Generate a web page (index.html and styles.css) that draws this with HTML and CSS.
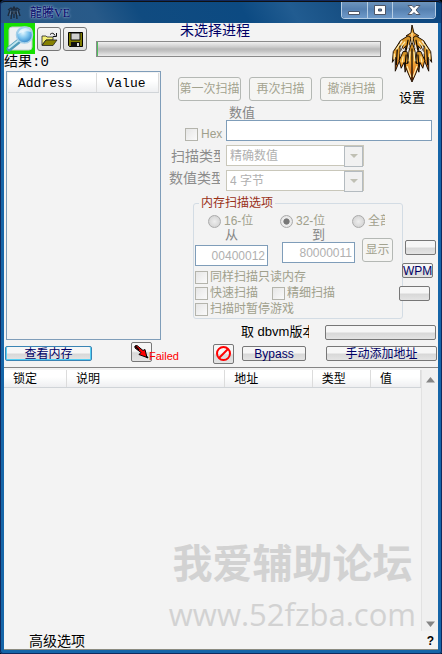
FILE: index.html
```html
<!DOCTYPE html>
<html lang="zh-CN">
<head>
    <meta charset="UTF-8">
    <meta name="viewport" content="width=device-width, initial-scale=1.0">
    <title>龍騰VE</title>
    <link rel="stylesheet" href="styles.css">
</head>
<body>
    <div class="window">
        <header class="titlebar">
            <svg class="app-icon" viewBox="0 0 14 14" width="14" height="14">
                <path d="M1 4l3-2 1 2 2-3 2 3 1-2 3 2M3 4l-2 6M5 4L4 13M7 2v10M9 4l1 9M11 4l2 6M4 7h6" fill="none" stroke="#1d2b3d" stroke-width="1.4"/>
                <path d="M4 5l-1 4M10 5l1 4M7 5v3" stroke="#7e8f9f" stroke-width=".6"/>
            </svg>
            <h1>龍騰VE</h1>
            <div class="window-buttons">
                <button type="button" aria-label="最小化"><svg width="14" height="12" viewBox="0 0 14 12"><path d="M1.500 7.500h11v3h-11z" fill="#fff" stroke="#4d5668"/></svg></button>
                <button type="button" aria-label="最大化"><svg width="14" height="12" viewBox="0 0 14 12"><path d="M1.500 1.500h11v9h-11zM5.500 5h3v2h-3z" fill="#fff" fill-rule="evenodd" stroke="#4d5668"/></svg></button>
                <button type="button" class="close" aria-label="关闭"><svg width="14" height="12" viewBox="0 0 14 12"><path d="M1 1.500h4l2 2 2-2h4L9 6l4 4.500H9l-2-2-2 2H1L5 6z" fill="#fff" stroke="#4d5668"/></svg></button>
            </div>
        </header>

        <main class="panel">
            <div class="tools">
                <div class="tool-row">
                    <button type="button" class="tool tool-process" aria-label="选择进程">
                        <svg width="31" height="31" viewBox="0 0 31 31">
                            <defs>
                                <radialGradient id="lens" cx=".4" cy=".35" r=".7">
                                    <stop offset="0" stop-color="#e4f8ff"/>
                                    <stop offset=".5" stop-color="#7cc4ee"/>
                                    <stop offset="1" stop-color="#2c80c4"/>
                                </radialGradient>
                            </defs>
                            <path d="M5 7q0-3 3-3h15q4 0 5 3v17q0 3-3 3H8q-3 0-3-3z" fill="#edf0f2" stroke="#c3cbd0"/>
                            <path d="M5 26l10-8" stroke="#4f9ab8" stroke-width="5" stroke-linecap="round"/>
                            <path d="M5 25l10-8" stroke="#c0e6ee" stroke-width="2" stroke-linecap="round"/>
                            <circle cx="20.500" cy="12" r="8" fill="url(#lens)" stroke="#a4cfe8" stroke-width="1.500"/>
                            <path d="M14 11q1-5 7-6 5 0 6 4-6-2-13 2z" fill="#fff" opacity=".6"/>
                        </svg>
                    </button>
                    <button type="button" class="tool" aria-label="打开">
                        <svg width="17" height="15" viewBox="0 0 17 15">
                            <path d="M1 13V4h4l1 1h6v3H5z" fill="#f5f076" stroke="#222" stroke-width=".8"/>
                            <path d="M1 13.500L5 8h11l-4 5.500z" fill="#858000" stroke="#222" stroke-width=".8"/>
                            <path d="M9 2.500q3-3 5 1M15.500 1v3.500H12" fill="none" stroke="#111"/>
                        </svg>
                    </button>
                    <button type="button" class="tool" aria-label="保存">
                        <svg width="15" height="15" viewBox="0 0 15 15">
                            <path d="M.5.500h14v14h-13l-1-1z" fill="#807d00" stroke="#000"/>
                            <path d="M3 1h9v7H3z" fill="#d0d0d0" stroke="#111"/>
                            <path d="M3 10h9v5H3z" fill="#111"/>
                            <path d="M9 11h2v3H9z" fill="#ddd"/>
                        </svg>
                    </button>
                </div>
                <p class="result">结果:0</p>
            </div>

            <div class="process">
                <h2 id="process-name">未选择进程</h2>
                <progress value="1" max="200" aria-labelledby="process-name"></progress>
            </div>

            <a class="settings" href="#">
                <svg width="42" height="58" viewBox="0 0 42 58">
                    <defs>
                        <linearGradient id="gold" x2="0" y2="1">
                            <stop offset="0" stop-color="#c98a20"/>
                            <stop offset=".5" stop-color="#f2aa3a"/>
                            <stop offset="1" stop-color="#c04c0c"/>
                        </linearGradient>
                    </defs>
                    <g fill="url(#gold)" stroke="#1c0e02" stroke-width="1">
                        <path d="M21 0l2 8 5 3-4 1-3 6-3-6-3-1 5-3z"/>
                        <path d="M17 11l-8 5-4 8 7-4-2 7 5-6-2 10 5-9 2-9zM25 11l8 5 4 8-7-4 2 7-5-6 2 10-5-9-2-9z"/>
                        <path d="M8 18l-6 9-1 11 3-5 0 14 4-10 1-12zM34 18l6 9 1 11-3-5 0 14-4-10-1-12z"/>
                        <path d="M12 27l-4 9 2 8 3-6 1 10 3-12-1-9zM30 27l4 9-2 8-3-6-1 10-3-12 1-9z"/>
                        <path d="M21 17l-3 9-1 13-4 0 4 10 4 9 4-9 4-10-4 0-1-13z"/>
                    </g>
                    <path d="M21 8v10M19 27l-1 10M23 27l1 10M16 42l4 11M26 42l-4 11M9 19l-4 6M33 19l4 6M14 17l-4 5M28 17l4 5M3 29l0 6M39 29l0 6M12 32l-1 6M30 32l1 6" stroke="#fff0b4" stroke-width="1.200"/>
                    <path d="M21 24v32M17 15l-2 11M25 15l2 11M6 25l-1 16M36 25l1 16M15 30l-1 12M27 30l1 12" stroke="#150b02" stroke-width="1.300"/>
                    <path d="M11 16l-2 3M31 16l2 3M12 24l-3 5M30 24l3 5M18 20l-2 7M24 20l2 7" stroke="#f3f3f3" stroke-width="1.200"/>
                </svg>
                <span>设置</span>
            </a>

            <div class="found-list">
                <table>
                    <thead>
                        <tr><th>Address</th><th>Value</th></tr>
                    </thead>
                </table>
            </div>

            <div class="scan-buttons">
                <button type="button" class="flat" disabled>第一次扫描</button>
                <button type="button" class="flat" disabled>再次扫描</button>
                <button type="button" class="flat" disabled>撤消扫描</button>
            </div>

            <form class="scan-form">
                <label class="value-label" for="value">数值</label>
                <div class="fields">
                    <label class="check hex"><input type="checkbox" disabled>Hex</label>
                    <input type="text" id="value" class="value-input">
                    <label class="field-label" for="scan-type">扫描类型</label>
                    <span class="combo"><select id="scan-type" disabled><option>精确数值</option></select></span>
                    <label class="field-label wide" for="value-type">数值类型</label>
                    <span class="combo"><select id="value-type" disabled><option>4 字节</option></select></span>
                </div>

                <div class="options-row">
                    <fieldset>
                        <legend>内存扫描选项</legend>
                        <div class="bits">
                            <label class="check"><input type="radio" name="bits" disabled>16-位</label>
                            <label class="check"><input type="radio" name="bits" checked disabled>32-位</label>
                            <label class="check all"><input type="radio" name="bits" disabled>全部</label>
                        </div>
                        <div class="range">
                            <label class="from">从<input type="text" value="00400012" disabled></label>
                            <label class="to">到<input type="text" value="80000011" disabled></label>
                            <button type="button" class="flat" disabled>显示</button>
                        </div>
                        <div class="checks">
                            <label class="check full"><input type="checkbox" disabled>同样扫描只读内存</label>
                            <label class="check"><input type="checkbox" disabled>快速扫描</label>
                            <label class="check"><input type="checkbox" disabled>精细扫描</label>
                            <label class="check full"><input type="checkbox" disabled>扫描时暂停游戏</label>
                        </div>
                    </fieldset>
                    <div class="side-buttons">
                        <button type="button" class="btn" aria-label="选项一"></button>
                        <button type="button" class="btn">WPM</button>
                        <button type="button" class="btn" aria-label="选项二"></button>
                    </div>
                </div>

                <div class="dbvm">
                    <span>取 dbvm版本</span>
                    <button type="button" class="btn" aria-label="取 dbvm版本"></button>
                </div>
            </form>
        </main>

        <div class="actions">
            <button type="button" class="btn view-memory">查看内存</button>
            <button type="button" class="btn square" aria-label="添加选中地址">
                <svg width="15" height="14" viewBox="0 0 15 14"><path d="M1 1l2-.5 6 5 2-1 2 8-8-3 2-2L1 3z" fill="#f00" stroke="#000"/><path d="M1 1l4 4M12 11l2 2" stroke="#000" stroke-width="1.500"/></svg>
            </button>
            <span class="failed">Failed</span>
            <button type="button" class="btn square stop" aria-label="清除列表">
                <svg width="17" height="17" viewBox="0 0 17 17"><circle cx="8.500" cy="8.500" r="6.500" fill="none" stroke="#f00" stroke-width="2"/><path d="M4 13l9-9" stroke="#f00" stroke-width="2"/></svg>
            </button>
            <button type="button" class="btn bypass">Bypass</button>
            <button type="button" class="btn add-address">手动添加地址</button>
        </div>

        <section class="address-list">
            <div class="address-table">
                <table>
                    <thead>
                        <tr><th>锁定</th><th>说明</th><th>地址</th><th>类型</th><th>值</th></tr>
                    </thead>
                </table>
            </div>
            <div class="scrollbar">
                <svg width="9" height="6" viewBox="0 0 9 6"><path d="M0 5.500L4.500 0 9 5.500z" fill="#858585"/></svg>
                <svg width="9" height="6" viewBox="0 0 9 6"><path d="M0 .5L4.500 6 9 .5z" fill="#858585"/></svg>
            </div>
            <div class="watermark">
                <strong>我爱辅助论坛</strong>
                <span>www.52fzba.com</span>
            </div>
        </section>

        <footer>
            <a href="#">高级选项</a>
            <a href="#" class="help">?</a>
        </footer>
    </div>
</body>
</html>
```

FILE: styles.css
```css
* {
    box-sizing: border-box;
}
body {
    margin: 0;
    font-family: "Liberation Sans", "Noto Sans CJK SC", sans-serif;
    font-size: 12px;
    line-height: 14px;
    color: #000;
    background: #000;
}
h1, h2, p {
    margin: 0;
    font-weight: normal;
}
button, input, select {
    margin: 0;
    padding: 0;
    font: inherit;
}
a {
    color: inherit;
    text-decoration: none;
}
svg {
    display: block;
}
table {
    width: 100%;
    table-layout: fixed;
    border-collapse: collapse;
}
th {
    font-weight: normal;
    text-align: left;
    white-space: nowrap;
    background: linear-gradient(#fff 40%, #eeeff1);
    border-right: 1px solid #dcdcdc;
    border-bottom: 1px solid #d0d4d8;
}

/* window */
.window {
    display: flex;
    flex-direction: column;
    min-height: 100vh;
    background: #f3f3f3;
    border: 4px solid #1565a8;
    border-top: 0;
    border-radius: 5px 5px 3px 3px;
    box-shadow: inset 0 -1px #8b8b80;
    outline: 1px solid #10295e;
    outline-offset: -1px;
}
.titlebar {
    display: flex;
    height: 23px;
    margin: 0 -4px;
    padding-left: 7px;
    border-top: 2px solid #111;
    border-radius: 5px 5px 0 0;
    background: linear-gradient(60deg, #2b5884 0, #285a89 22%, #104b80 32%, #0c4a82 55%, #215c91 66%, #144c80 80%, #0b4680);
}
.app-icon {
    margin-top: 4px;
}
.titlebar h1 {
    flex: 1;
    margin-left: 9px;
    padding-top: 3px;
    font-family: "Liberation Serif", "Noto Sans CJK TC", serif;
    font-size: 12px;
    line-height: 16px;
    color: #06066a;
    text-shadow: 0 0 2px #9bb4d4, 0 0 3px #9bb4d4;
}
.window-buttons {
    display: flex;
    width: 95px;
    height: 17px;
    margin-right: 6px;
    border: 1px solid #b5cde4;
    border-top: 0;
    border-radius: 0 0 4px 4px;
    overflow: hidden;
}
.window-buttons button {
    display: flex;
    flex: 1;
    align-items: center;
    justify-content: center;
    border: 0;
    border-right: 1px solid #b5cde4;
    background: linear-gradient(#6d94bd, #5580b0 45%, #6e9aca);
}
.window-buttons .close {
    flex: 0 0 42px;
    border: 0;
}

/* top half */
.panel {
    display: grid;
    grid-template-columns: 92px 65px minmax(0, 1fr) 57px;
    grid-template-rows: 48px 34px auto;
}
.tool-row {
    display: flex;
    gap: 2px;
}
.tool {
    display: flex;
    align-items: center;
    justify-content: center;
    width: 24px;
    height: 24px;
    margin-top: 4px;
    border: 1px solid #777;
    border-radius: 3px;
    background: linear-gradient(#f4f4f4, #ddd);
}
.tool-process {
    width: 31px;
    height: 31px;
    margin: 0;
    border: 0;
    border-radius: 0;
    background: #16e000;
}
.result {
    font-size: 14px;
    line-height: 16px;
    font-family: "Liberation Mono", "Noto Sans CJK SC", monospace;
}
.process {
    grid-column: 2 / 4;
}
.process h2 {
    margin-left: 84px;
    font-size: 14px;
    line-height: 14px;
    color: #000066;
}
.process progress {
    display: block;
    width: 100%;
    height: 16px;
    margin-top: 4px;
    appearance: none;
    border: 1px solid #8a8a8a;
    background: none;
}
.process progress::-webkit-progress-bar {
    background: linear-gradient(#f0f0f0, #cdcdcd 35%, #b8b8b8 50%, #c4c4c4 65%, #ececec);
}
.process progress::-webkit-progress-value {
    background: #4fbf5c;
}
.settings {
    grid-column: 4;
    grid-row: 1 / 3;
    display: flex;
    flex-direction: column;
    align-items: center;
    gap: 9px;
    padding: 2px 0 0 5px;
    font-size: 13px;
}
.settings span {
    line-height: 14px;
}
.found-list {
    grid-column: 1 / 3;
    grid-row: 2 / 4;
    margin-left: 2px;
    border: 1px solid #7f9db9;
    padding: 1px;
}
.found-list th {
    height: 19px;
    padding: 3px 0 0 10px;
    font-family: "Liberation Mono", monospace;
    font-size: 13px;
    line-height: 14px;
}
.found-list th:first-child {
    width: 88px;
}
.scan-buttons {
    display: flex;
    gap: 8px;
    padding: 6px 0 0 17px;
}
.flat {
    height: 24px;
    padding: 0;
    border: 1px solid #b4b8b4;
    border-radius: 3px;
    background: #f5f5f3;
    color: #a3a38f;
    white-space: nowrap;
}
.scan-buttons .flat {
    flex: 0 0 63px;
}

/* scan form */
.scan-form {
    grid-column: 3 / 5;
    color: #a0a08c;
}
.value-label {
    display: block;
    margin: 1px 0 0 68px;
    font-size: 13px;
    line-height: 14px;
    color: #858585;
}
.fields {
    display: grid;
    grid-template-columns: 65px 1fr;
    grid-template-rows: 21px 21px 21px;
    row-gap: 4px;
    margin-right: 6px;
}
.check {
    display: flex;
    align-items: center;
    gap: 2px;
    height: 14px;
    white-space: nowrap;
    overflow: hidden;
}
.check input {
    flex: none;
    width: 13px;
    height: 13px;
    appearance: none;
    border: 1px solid #b4b4ac;
    background: linear-gradient(135deg, #e6e6e6, #fafafa);
}
.check input[type=radio] {
    border-color: #aaa;
    border-radius: 50%;
    background: radial-gradient(#eee, #ccc);
}
.check input[type=radio]:checked {
    background: radial-gradient(#777 35%, #eee 45%, #ddd);
}
.hex {
    align-self: end;
    margin-left: 24px;
    width: 38px;
    gap: 3px;
}
.value-input {
    width: 100%;
    padding: 0 4px;
    border: 1px solid #7f9db9;
    background: #fff;
}
.field-label {
    width: 49px;
    height: 16px;
    margin: 3px 0 0 10px;
    overflow: hidden;
    white-space: nowrap;
    font-size: 14px;
    line-height: 16px;
    color: #8c8c8c;
}
.field-label.wide {
    width: 51px;
    margin: 0 0 0 8px;
}
.combo {
    position: relative;
    display: block;
    width: 138px;
}
.combo select {
    width: 100%;
    height: 21px;
    padding-left: 3px;
    appearance: none;
    border: 1px solid #c9c7ba;
    border-radius: 0;
    background: #fff;
    color: #b0b0b0;
    opacity: 1;
}
.combo::before {
    content: "";
    position: absolute;
    top: 1px;
    right: 1px;
    width: 17px;
    height: 19px;
    border: 1px solid #b4bbc0;
    background: #f1f1f1;
    pointer-events: none;
}
.combo::after {
    content: "";
    position: absolute;
    top: 9px;
    right: 6px;
    border: 4px solid transparent;
    border-top-color: #c0c0b4;
    border-bottom: 0;
    pointer-events: none;
}
.options-row {
    display: flex;
    margin: 5px 2px 0 32px;
}
fieldset {
    flex: 1;
    min-width: 0;
    margin: 0;
    padding: 4px 1px 2px;
    border: 1px solid #d3dce4;
    border-radius: 3px;
}
legend {
    margin-left: 4px;
    padding: 0 2px;
    line-height: 14px;
    color: #993018;
}
.bits {
    display: grid;
    grid-template-columns: 72px 72px 1fr;
    padding-left: 13px;
}
.bits .check {
    gap: 3px;
}
.bits .all {
    width: 33px;
}
.range {
    display: flex;
    align-items: flex-start;
    gap: 7px;
}
.range label {
    width: 73px;
    font-size: 13px;
    line-height: 14px;
    color: #858585;
    text-align: center;
}
.range .to {
    margin-left: 7px;
}
.range input {
    display: block;
    width: 100%;
    height: 21px;
    padding-right: 2px;
    border: 1px solid #7f9db9;
    background: #fff;
    color: #b0b0b0;
    font-size: 12px;
    text-align: right;
}
.range .from input {
    margin-top: 3px;
}
.range .flat {
    width: 31px;
    margin-top: 10px;
}
.checks {
    display: grid;
    grid-template-columns: 77px 1fr;
    gap: 2px 0;
    margin-top: 4px;
}
.checks .full {
    grid-column: 1 / 3;
}
/* the buttons stick out over the edge of the group box */
.side-buttons {
    display: flex;
    flex-direction: column;
    gap: 8px;
    width: 37px;
    margin-left: -4px;
    padding-top: 44px;
}
.btn {
    height: 15px;
    padding: 0;
    border: 1px solid #777;
    border-radius: 2px;
    background: linear-gradient(#f6f6f6 45%, #d8d8d8 55%, #e4e4e4);
    color: #000066;
    line-height: 12px;
    white-space: nowrap;
}
.side-buttons .btn {
    width: 31px;
    align-self: center;
}
.side-buttons .btn:first-child {
    align-self: flex-end;
}
.side-buttons .btn:last-child {
    align-self: flex-start;
}
.dbvm {
    display: flex;
    align-items: center;
    gap: 16px;
    margin: 5px 2px 0 80px;
    color: #000;
}
.dbvm span {
    width: 68px;
    overflow: hidden;
    white-space: nowrap;
    font-size: 13px;
    line-height: 16px;
}
.dbvm .btn {
    flex: 1;
}

/* buttons above the address list */
.actions {
    display: flex;
    align-items: center;
    height: 28px;
    padding: 0 1px;
    border-bottom: 1px solid #858585;
}
.view-memory {
    width: 87px;
    border-color: #3a84b4;
    box-shadow: inset 1px 0 #55d0f4, inset -1px 0 #55d0f4, inset 0 -1px #55d0f4;
}
.square {
    display: flex;
    align-items: center;
    justify-content: center;
    width: 21px;
    height: 20px;
    margin: 0 0 4px 39px;
}
.failed {
    width: 64px;
    margin-left: -3px;
    padding-top: 4px;
    font-size: 11px;
    color: #f00;
}
.stop {
    margin: 0;
}
.bypass {
    width: 64px;
    margin: 0 20px 0 8px;
}
.add-address {
    flex: 1;
}

/* address list */
.address-list {
    position: relative;
    display: flex;
    flex: 1;
    padding-top: 2px;
}
.address-table {
    flex: 1;
}
.address-table th {
    height: 17px;
    padding: 1px 0 0 9px;
    line-height: 14px;
}
.address-table th:nth-child(1) {
    width: 15%;
}
.address-table th:nth-child(2) {
    width: 38%;
}
.address-table th:nth-child(3) {
    width: 21%;
}
.address-table th:nth-child(4) {
    width: 14%;
}
.scrollbar {
    display: flex;
    flex-direction: column;
    justify-content: space-between;
    align-items: center;
    width: 17px;
    padding: 7px 0 4px;
    border-left: 1px solid #e2e2e2;
    background: #f0f0f0;
}
.watermark {
    position: absolute;
    right: 22px;
    bottom: -4px;
    display: flex;
    flex-direction: column;
    align-items: center;
    color: #d2d2d2;
    font-family: "Open Sans", "Noto Sans CJK SC", sans-serif;
    pointer-events: none;
}
.watermark strong {
    font-size: 40px;
    line-height: 60px;
}
.watermark span {
    font-size: 31px;
    line-height: 42px;
}
footer {
    display: flex;
    justify-content: space-between;
    padding: 2px 4px 1px 25px;
    font-size: 14px;
    line-height: 16px;
}
.help {
    font-size: 12px;
    font-weight: bold;
}
```
